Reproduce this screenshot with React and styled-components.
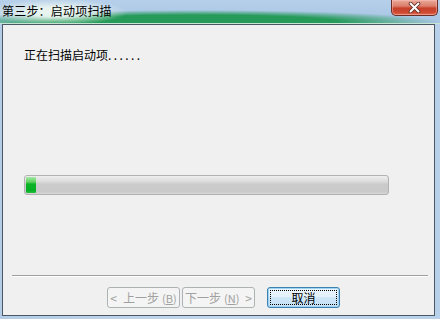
import React from 'react'
import styled, { createGlobalStyle } from 'styled-components'

const GlobalStyle = createGlobalStyle`
  html, body {
    margin: 0;
    padding: 0;
    background: #bcd2ea;
  }
  body {
    font-family: "Noto Sans CJK SC", "Noto Sans", sans-serif;
    font-size: 12px;
  }
`

const Window = styled.div`
  width: 440px;
  height: 319px;
  display: flex;
  flex-direction: column;
  background: linear-gradient(to right, #b5cce6, #c3d8ee 50%, #b9d0ea);
  overflow: hidden;
`

const TitleBar = styled.div`
  height: 24px;
  flex: none;
  display: flex;
  align-items: flex-start;
  background:
    radial-gradient(ellipse 72px 13px at 56px 12px, rgba(236, 246, 240, 0.95) 35%, rgba(236, 246, 240, 0) 100%),
    radial-gradient(ellipse 245px 12px at 195px 22px, #259a59 58%, rgba(37, 154, 89, 0) 100%),
    linear-gradient(to bottom, #b6cfea, #a8c5e4);
  border-bottom: 1px solid #c4e6d2;
  box-sizing: border-box;
`

const Title = styled.div`
  padding: 3px 0 0 2px;
  line-height: 16px;
  font-size: 12px;
  letter-spacing: 0.2px;
  color: #000;
`

const CloseButton = styled.div`
  margin-left: auto;
  margin-right: 2px;
  width: 47px;
  height: 16px;
  box-sizing: border-box;
  border: 1px solid #6b2d25;
  border-top: none;
  border-radius: 0 0 5px 5px;
  background: linear-gradient(to bottom, #e9a899 0%, #dc7f6c 40%, #c6402a 55%, #cf4b33 85%, #e0775c 100%);
  box-shadow: inset 0 0 0 1px rgba(255, 200, 190, 0.45);
  display: flex;
  align-items: center;
  justify-content: center;
`

const Client = styled.div`
  flex: 1;
  margin: 0 5px 3px 2px;
  border: 1px solid #4a5866;
  background: #f0f0f0;
  display: flex;
  flex-direction: column;
`

const Message = styled.div`
  padding: 22px 0 0 21px;
  line-height: 16px;
  color: #000;
`

const Dots = styled.span`
  letter-spacing: 2.4px;
`

const Progress = styled.div`
  margin: 112px 0 0 21px;
  width: 365px;
  height: 20px;
  box-sizing: border-box;
  border: 1px solid #b2b2b2;
  border-radius: 3px;
  background: linear-gradient(to bottom, #eeeeee 0%, #dcdcdc 30%, #cbcbcb 45%, #c9c9c9 85%, #d6d6d6 100%);
  padding: 1px;
  display: flex;
`

const Chunk = styled.div`
  height: 100%;
  border-radius: 1px;
  background: linear-gradient(to bottom, #a4e8a4 0%, #63d263 30%, #0bb325 45%, #06b025 85%, #2cbd40 100%);
`

const Separator = styled.div`
  margin: 80px 6px 0 9px;
  height: 0;
  border-top: 1px solid #a0a0a0;
  border-bottom: 1px solid #ffffff;
`

const ButtonRow = styled.div`
  margin-top: 10px;
  padding-left: 104px;
  display: flex;
  gap: 2px;
`

const Button = styled.div`
  width: 73px;
  height: 21px;
  box-sizing: border-box;
  border: 1px solid ${p => (p.$primary ? '#3c7fb1' : '#adb2b5')};
  border-radius: 3px;
  margin-left: ${p => (p.$primary ? '10px' : '0')};
  background: ${p =>
    p.$primary
      ? 'linear-gradient(to bottom, #eef6fc 0%, #e2f0fa 45%, #cfe7f7 50%, #c3e0f4 100%)'
      : '#f4f4f4'};
  box-shadow: ${p => (p.$primary ? 'inset 0 0 0 1px #9fd5f1' : 'none')};
  color: ${p => (p.$disabled ? '#a0a0a0' : '#000')};
  display: flex;
  align-items: center;
  justify-content: center;
  gap: 6px;
  line-height: 16px;
  position: relative;
`

const Focus = styled.div`
  position: absolute;
  inset: 2px;
  border: 1px dotted #000;
`

const Key = styled.span`
  margin-left: 3px;
  font-size: 11px;
`

function App() {
  return (
    <Window>
      <GlobalStyle />
      <TitleBar>
        <Title>第三步：启动项扫描</Title>
        <CloseButton>
          <svg width="13" height="11" viewBox="0 0 13 11">
            <path d="M2.5 1.5 L10.5 9.5 M10.5 1.5 L2.5 9.5" stroke="#5a2a22" strokeWidth="3.6" strokeLinecap="round" />
            <path d="M2.5 1.5 L10.5 9.5 M10.5 1.5 L2.5 9.5" stroke="#ffffff" strokeWidth="2" strokeLinecap="round" />
          </svg>
        </CloseButton>
      </TitleBar>
      <Client>
        <Message>
          正在扫描启动项<Dots>......</Dots>
        </Message>
        <Progress>
          <Chunk style={{ width: 10 }} />
        </Progress>
        <Separator />
        <ButtonRow>
          <Button $disabled>
            <span>&lt;</span>
            <span>
              上一步<Key>(<u>B</u>)</Key>
            </span>
          </Button>
          <Button $disabled>
            <span>
              下一步<Key>(<u>N</u>)</Key>
            </span>
            <span>&gt;</span>
          </Button>
          <Button $primary>
            <Focus />
            取消
          </Button>
        </ButtonRow>
      </Client>
    </Window>
  )
}

export default App
